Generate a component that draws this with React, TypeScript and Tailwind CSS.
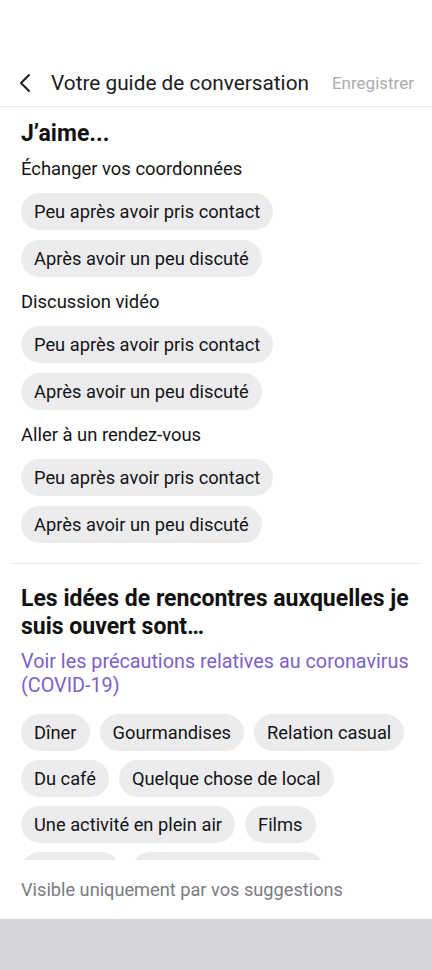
import React from "react";

const Chip = ({ children }: { children: React.ReactNode }) => (
  <div className="h-[37px] rounded-full bg-[#ececee] px-[13px] flex items-center text-[18.3px] text-[#141416] whitespace-nowrap">
    {children}
  </div>
);

const Group = ({ label }: { label: string }) => (
  <div className="flex flex-col">
    <div className="text-[18.4px] leading-[24px] text-[#141416]">{label}</div>
    <div className="mt-[12px] flex flex-col items-start gap-[10px]">
      <Chip>Peu après avoir pris contact</Chip>
      <Chip>Après avoir un peu discuté</Chip>
    </div>
  </div>
);

export default function App() {
  const ideas = [
    ["Dîner", "Gourmandises", "Relation casual"],
    ["Du café", "Quelque chose de local"],
    ["Une activité en plein air", "Films"],
  ];
  return (
    <div
      className="w-[432px] h-[970px] bg-white flex flex-col overflow-hidden"
      style={{ fontFamily: "Roboto, 'Noto Sans', sans-serif" }}
    >
      <div className="h-[60px] shrink-0" />
      <div className="h-[47px] shrink-0 flex items-center border-b border-[#e8e8ea]">
        <div className="w-[51px] flex items-center pl-[17px]">
          <svg width="14" height="22" viewBox="0 0 14 22" fill="none">
            <path d="M12 3 L4 11 L12 19" stroke="#1c1c1e" strokeWidth="2" strokeLinecap="round" strokeLinejoin="round" />
          </svg>
        </div>
        <div className="text-[20.8px] text-[#1c1c1e] leading-none">Votre guide de conversation</div>
        <div className="ml-auto pr-[18px] text-[17px] text-[#ababb0] leading-none">Enregistrer</div>
      </div>
      <div className="h-[753px] shrink-0 overflow-hidden">
        <div className="px-[21px] pt-[13px]">
          <div className="text-[23px] font-bold leading-[28px] text-[#111]">J’aime...</div>
          <div className="mt-[9px] flex flex-col gap-[13px]">
            <Group label="Échanger vos coordonnées" />
            <Group label="Discussion vidéo" />
            <Group label="Aller à un rendez-vous" />
          </div>
        </div>
        <div className="mx-[11px] mt-[20px] h-px bg-[#ececee]" />
        <div className="px-[21px] pt-[21px]">
          <div className="text-[23px] font-bold leading-[28px] text-[#111]">
            Les idées de rencontres auxquelles je suis ouvert sont…
          </div>
          <div className="mt-[9px] mr-[-14px] text-[19.8px] leading-[24px] text-[#7d5fc8]">
            Voir les précautions relatives au coronavirus (COVID-19)
          </div>
          <div className="mt-[16px] flex flex-col gap-[9px]">
            {ideas.map((row, i) => (
              <div key={i} className="flex gap-[10px]">
                {row.map((t) => (
                  <Chip key={t}>{t}</Chip>
                ))}
              </div>
            ))}
            <div className="flex gap-[12px]">
              <div className="h-[37px] w-[99px] rounded-full bg-[#ececee]" />
              <div className="h-[37px] w-[192px] rounded-full bg-[#ececee]" />
            </div>
          </div>
        </div>
      </div>
      <div className="h-[59px] shrink-0 flex items-center px-[21px] text-[18.2px] text-[#7a7a7f]">
        Visible uniquement par vos suggestions
      </div>
      <div className="flex-1 bg-[#d6d6da]" />
    </div>
  );
}
